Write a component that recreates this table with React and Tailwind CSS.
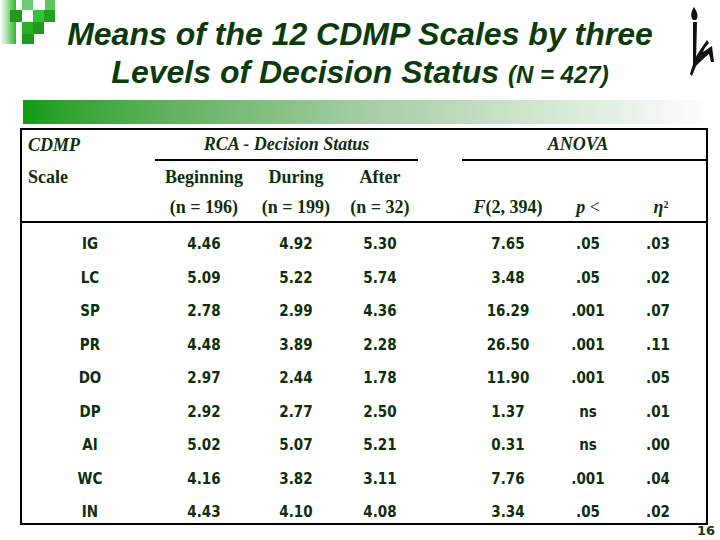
const rows = [
  ["IG", "4.46", "4.92", "5.30", "7.65", ".05", ".03"],
  ["LC", "5.09", "5.22", "5.74", "3.48", ".05", ".02"],
  ["SP", "2.78", "2.99", "4.36", "16.29", ".001", ".07"],
  ["PR", "4.48", "3.89", "2.28", "26.50", ".001", ".11"],
  ["DO", "2.97", "2.44", "1.78", "11.90", ".001", ".05"],
  ["DP", "2.92", "2.77", "2.50", "1.37", "ns", ".01"],
  ["AI", "5.02", "5.07", "5.21", "0.31", "ns", ".00"],
  ["WC", "4.16", "3.82", "3.11", "7.76", ".001", ".04"],
  ["IN", "4.43", "4.10", "4.08", "3.34", ".05", ".02"],
];

const cols = "grid grid-cols-[134px_96px_88px_80px_30px_116px_44px_96px]";

const Logo = () => (
  <svg width="60" height="46" viewBox="0 0 60 46" className="absolute left-0 top-0">
    <defs>
      <linearGradient id="lg" x1="0" x2="1">
        <stop offset="0" stopColor="#ffffff" />
        <stop offset="1" stopColor="#2fb52f" />
      </linearGradient>
    </defs>
    <rect x="0" y="0" width="16" height="44" fill="url(#lg)" />
    <rect x="10" y="10" width="12" height="12" fill="#1e9a1e" />
    <rect x="22" y="0" width="11" height="10" fill="#6ccf6c" />
    <rect x="22" y="22" width="12" height="12" fill="#28b028" />
    <rect x="33" y="10" width="12" height="12" fill="#36c236" />
    <rect x="45" y="0" width="10" height="10" fill="#5dc85d" />
    <rect x="44" y="10" width="11" height="12" fill="#22a022" />
    <rect x="33" y="22" width="11" height="12" fill="#1e9a1e" />
    <rect x="22" y="34" width="12" height="10" fill="#1e9a1e" />
  </svg>
);

const Emblem = () => (
  <svg width="34" height="74" viewBox="0 0 34 74" className="absolute left-[684px] top-[4px]">
    <path d="M10 3 C7 8 6 12 9 16 L12 16 C15 12 13 8 10 3 Z" fill="#111" />
    <path d="M9 18 L13 18 L12 58 L9 60 Z" fill="#111" />
    <path d="M11 54 C16 46 20 40 23 36 L25 39 C22 42 20 45 19 48 C22 46 25 44 28 42 L30 58 L27 58 L25 50 C21 53 16 58 12 62 L8 72 L6 70 Z" fill="#111" />
  </svg>
);

export default function App() {
  return (
    <div className="relative w-[720px] h-[540px] bg-white overflow-hidden text-[#0c300c]">
      <Logo />
      <Emblem />

      <div className="pt-[15px] text-center font-['Liberation_Sans',Arial,sans-serif] font-bold italic text-[32px] leading-[38px] text-[#0b3b0b]">
        <div>Means of the 12 CDMP Scales by three</div>
        <div>
          Levels of Decision Status <span className="text-[24px]">(N = 427)</span>
        </div>
      </div>

      <div className="ml-[23px] mt-[6px] w-[690px] h-[24px] bg-gradient-to-r from-[#0c9c0c] via-[#a6cda6] to-white" />

      <div className="ml-[20px] mt-[4px] w-[688px] h-[397px] border-2 border-black">
        <div className="border-b-2 border-black font-['Liberation_Serif','Times_New_Roman',serif] font-bold text-[18px] h-[93px]">
          <div className={`${cols} h-[31px]`}>
            <div className="pl-[6px] flex items-center italic">CDMP</div>
            <div className="col-span-3 flex items-center justify-center italic border-b-2 border-black -ml-px mr-[2px]">
              RCA - Decision Status
            </div>
            <div />
            <div className="col-span-3 flex items-center justify-center italic border-b-2 border-black ml-[12px] pr-[12px]">
              ANOVA
            </div>
          </div>
          <div className={`${cols} h-[32px] items-center`}>
            <div className="pl-[6px]">Scale</div>
            <div className="text-center">Beginning</div>
            <div className="text-center">During</div>
            <div className="text-center">After</div>
            <div />
            <div />
            <div />
            <div />
          </div>
          <div className={`${cols} h-[28px] items-center`}>
            <div />
            <div className="text-center">(n = 196)</div>
            <div className="text-center">(n = 199)</div>
            <div className="text-center">(n = 32)</div>
            <div />
            <div className="text-center">
              <i>F</i>(2, 394)
            </div>
            <div className="text-center">
              <i>p</i> <span className="font-normal">&lt;</span>
            </div>
            <div className="text-center pl-[6px]">
              <i>η</i>
              <sup className="text-[10px]">2</sup>
            </div>
          </div>
        </div>

        <div className="mt-[3px] font-['DejaVu_Sans_Condensed','DejaVu_Sans',Tahoma,sans-serif] font-bold text-[15px]">
          {rows.map((r) => (
            <div key={r[0]} className={`${cols} h-[33.5px] pt-[3px] items-center`}>
              <div className="text-center pl-[2px]">{r[0]}</div>
              <div className="text-center">{r[1]}</div>
              <div className="text-center">{r[2]}</div>
              <div className="text-center">{r[3]}</div>
              <div />
              <div className="text-center">{r[4]}</div>
              <div className="text-center">{r[5]}</div>
              <div className="text-center">{r[6]}</div>
            </div>
          ))}
        </div>
      </div>

      <div className="absolute left-[697px] top-[521px] font-['DejaVu_Sans',sans-serif] font-bold text-[13px] text-[#0b3b0b]">
        16
      </div>
    </div>
  );
}
